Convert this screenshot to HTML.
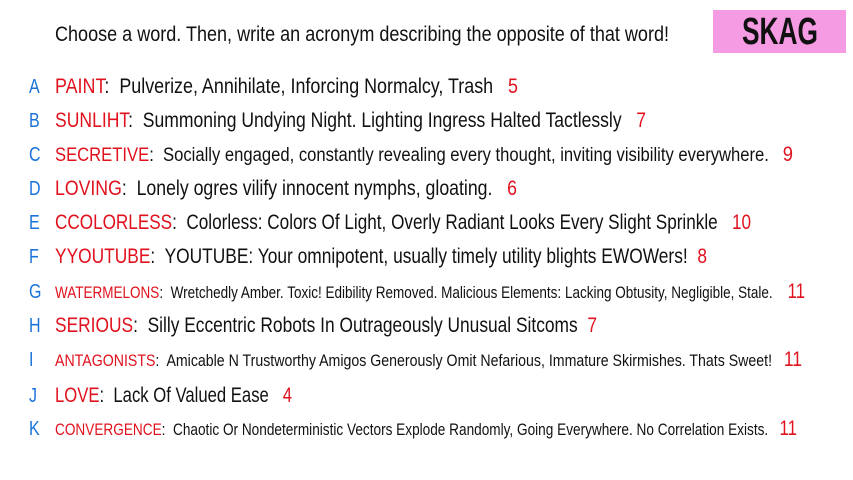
<!DOCTYPE html>
<html><head><meta charset="utf-8">
<style>
html,body{margin:0;padding:0;width:853px;height:480px;background:#fff;overflow:hidden}
body{position:relative;font-family:"Liberation Sans",sans-serif;color:#111}
.l{position:absolute;left:29px;color:#1a73d9;font-size:20px;line-height:20px;transform:scaleX(.8);transform-origin:0 50%}
.r{position:absolute;left:55px;white-space:nowrap;line-height:24px;transform-origin:0 50%}
.w{color:#e0121e}
.n{color:#e0121e;font-size:21px}
#box{position:absolute;left:713px;top:10px;width:133px;height:43px;background:#f59be3}
#sk{position:absolute;left:742px;top:12px;font-size:38px;line-height:40px;font-weight:bold;color:#111;white-space:nowrap;transform-origin:0 50%}
</style></head><body>
<div class="r" style="top:23px;font-size:21px" id="h">Choose a word. Then, write an acronym describing the opposite of that word!</div>
<div id="box"></div><div id="sk">SKAG</div>

<div class="l" style="top:77px">A</div>
<div class="r" style="top:75px;font-size:21px"><span class="w">PAINT</span>:&nbsp; Pulverize, Annihilate, Inforcing Normalcy, Trash&nbsp;&nbsp; <span class="n">5</span></div>
<div class="l" style="top:111px">B</div>
<div class="r" style="top:109px;font-size:21px"><span class="w">SUNLIHT</span>:&nbsp; Summoning Undying Night. Lighting Ingress Halted Tactlessly&nbsp;&nbsp; <span class="n">7</span></div>
<div class="l" style="top:145px">C</div>
<div class="r" style="top:143px;font-size:19px"><span class="w">SECRETIVE</span>:&nbsp; Socially engaged, constantly revealing every thought, inviting visibility everywhere.&nbsp;&nbsp; <span class="n">9</span></div>
<div class="l" style="top:179px">D</div>
<div class="r" style="top:177px;font-size:21px"><span class="w">LOVING</span>:&nbsp; Lonely ogres vilify innocent nymphs, gloating.&nbsp;&nbsp; <span class="n">6</span></div>
<div class="l" style="top:213px">E</div>
<div class="r" style="top:211px;font-size:21px"><span class="w">CCOLORLESS</span>:&nbsp; Colorless: Colors Of Light, Overly Radiant Looks Every Slight Sprinkle&nbsp;&nbsp; <span class="n">10</span></div>
<div class="l" style="top:247px">F</div>
<div class="r" style="top:245px;font-size:21px"><span class="w">YYOUTUBE</span>:&nbsp; YOUTUBE: Your omnipotent, usually timely utility blights EWOWers!&nbsp; <span class="n">8</span></div>
<div class="l" style="top:282px">G</div>
<div class="r" style="top:280px;font-size:17px"><span class="w">WATERMELONS</span>:&nbsp; Wretchedly Amber. Toxic! Edibility Removed. Malicious Elements: Lacking Obtusity, Negligible, Stale.&nbsp;&nbsp;&nbsp; <span class="n">11</span></div>
<div class="l" style="top:316px">H</div>
<div class="r" style="top:314px;font-size:21px"><span class="w">SERIOUS</span>:&nbsp; Silly Eccentric Robots In Outrageously Unusual Sitcoms&nbsp; <span class="n">7</span></div>
<div class="l" style="top:350px">I</div>
<div class="r" style="top:348px;font-size:17px"><span class="w">ANTAGONISTS</span>:&nbsp; Amicable N Trustworthy Amigos Generously Omit Nefarious, Immature Skirmishes. Thats Sweet!&nbsp;&nbsp; <span class="n">11</span></div>
<div class="l" style="top:386px">J</div>
<div class="r" style="top:384px;font-size:21px"><span class="w">LOVE</span>:&nbsp; Lack Of Valued Ease&nbsp;&nbsp; <span class="n">4</span></div>
<div class="l" style="top:419px">K</div>
<div class="r" style="top:417px;font-size:17px"><span class="w">CONVERGENCE</span>:&nbsp; Chaotic Or Nondeterministic Vectors Explode Randomly, Going Everywhere. No Correlation Exists.&nbsp;&nbsp; <span class="n">11</span></div>

<script>
var ends=[669,518,646,793,517,751,707,805,597,802,292,797];
var rs=document.querySelectorAll('.r');
for(var i=0;i<rs.length;i++){var w=rs[i].getBoundingClientRect().width;rs[i].style.transform='scaleX('+((ends[i]-55)/w)+')';}
var s=document.getElementById('sk');s.style.transform='scaleX('+(76/s.getBoundingClientRect().width)+')';
</script>
</body></html>
